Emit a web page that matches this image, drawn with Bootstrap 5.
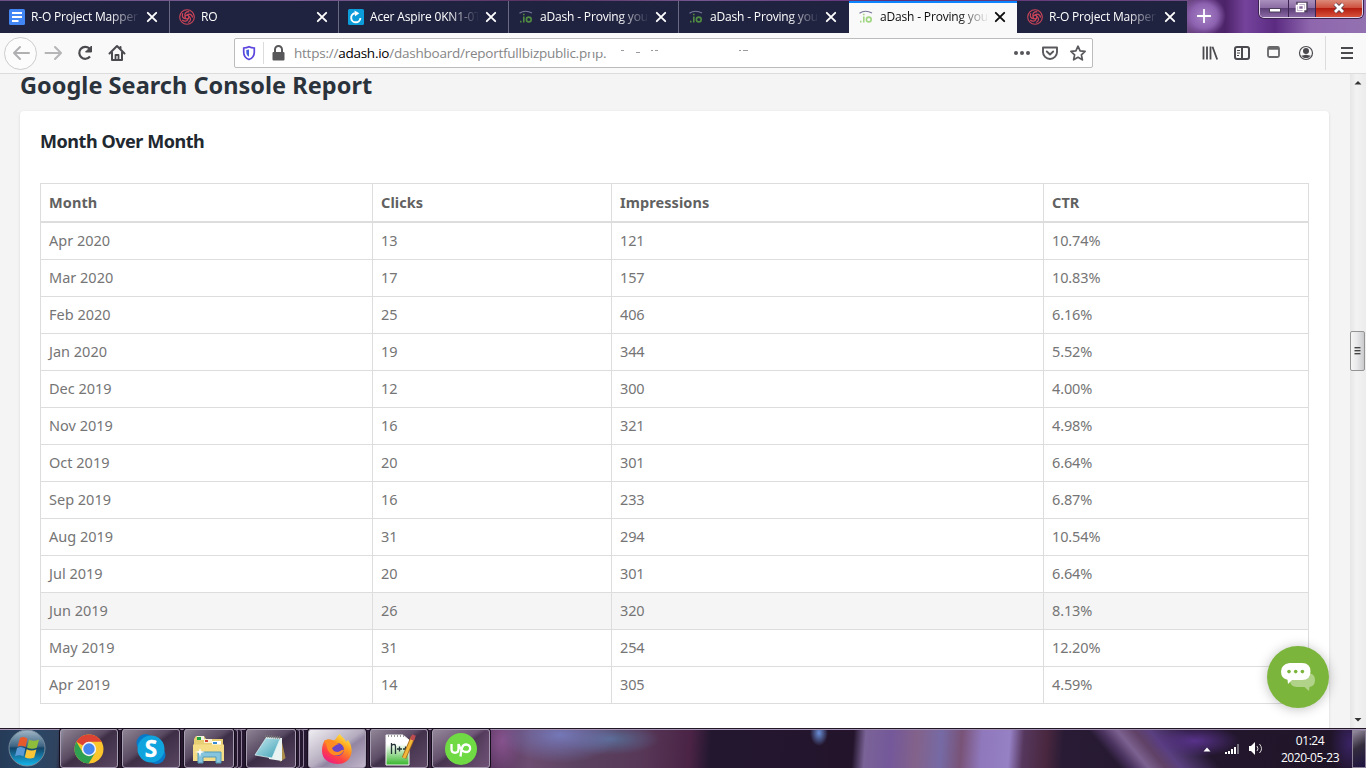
<!DOCTYPE html>
<html lang="en">
<head>
<meta charset="utf-8">
<title>aDash - Proving your</title>
<link href="https://cdn.jsdelivr.net/npm/bootstrap@5.3.0/dist/css/bootstrap.min.css" rel="stylesheet">
<style>
body{width:1366px;height:768px;overflow:hidden;font-family:"Open Sans","Noto Sans",sans-serif;background:#f4f4f4}
svg{display:block;flex:none}
.titlebar{height:33px;background:
 radial-gradient(ellipse 22px 20px at 1204px 16px,#a783c6,#8d62b0 60%,transparent),
 linear-gradient(90deg,#6b5185 0,#7a5d94 300px,#57305f 540px,#75568f 700px,#602f76 900px,#6d4b83 1187px,#5d3277 1200px,#4c2268 1225px,#75439b 1245px,#5b2b82 1275px,#8e66ad 1310px,#9372b1 1366px);padding-top:1px}
.tab-item{height:32px;background:#202340;color:#fff;border-right:1px solid #6a6a82;font-size:12px;padding-left:9px}
.tab-item.current{background:#f9f9fa;color:#0c0c0d;border:0;border-top:2px solid #0a84ff}
.tab-text{width:112px;margin-left:6px;margin-right:3px;white-space:nowrap;letter-spacing:-.17px;padding-bottom:1px;-webkit-mask-image:linear-gradient(90deg,#000 78px,transparent 109px);mask-image:linear-gradient(90deg,#000 78px,transparent 109px)}
.current .tab-text{margin-right:2px}
.caption-group{width:104px;height:18px;margin-left:auto;margin-right:3px;border:1px solid #e0d4ea;border-top:0;border-radius:0 0 5px 5px;margin-top:-1px;overflow:hidden;box-shadow:0 0 0 1px #3c2450}
.caption-group>div{height:100%;background:linear-gradient(#a990bd,#8a6aa3 48%,#5d3f77 50%,#8a68a4);border-right:1px solid #3c2450}
.caption-group>.closer{background:linear-gradient(#dc8a78,#cf5140 45%,#b51d10 50%,#d7513a);border:0}
.toolbar{height:41px;background:#f9f9fa;border-bottom:1px solid #dcdcdd;padding-left:4px;color:#4a4a4f}
.tool{width:32px;height:32px}
.back-ring{width:33px;height:33px;border:1px solid #ccc;border-radius:50%;background:#fcfcfc;color:#b0b0b3}
.urlbar{width:859px;height:30px;margin-left:101px;border:1px solid #bcbcbe;border-radius:2px;background:#fff;font-size:13.5px;letter-spacing:-.24px;color:#858587}
.vline{width:1px;background:#dcdcdd}
.viewport{height:654px;background:#f4f4f4}
.page-main{width:1350px;padding:0 21px 0 20px;font-family:"Noto Sans","Open Sans",sans-serif;overflow:hidden}
.page-main h2{font-size:23.5px;font-weight:700;color:#2a323c;line-height:22px;height:37px;margin:0;letter-spacing:.03px}
.panel{height:640px;background:#fff;border-radius:4px;box-shadow:0 1px 3px rgba(0,0,0,.13);padding:18px 20px 0}
.panel h3{font-size:18px;font-weight:700;line-height:24px;height:54px;margin:0;color:#212830;letter-spacing:-.45px}
.report{table-layout:fixed;width:1269px;border-collapse:separate;border-spacing:0;border:0 solid #ddd;border-width:1px 0 0 1px;font-size:14.5px;line-height:20px;margin:0;color:#757575}
.report>:not(caption)>*>*{border:0 solid #ddd;border-width:0 1px 1px 0;padding:7px 8px 9px;color:#757575;background:transparent;box-shadow:none}
.report>thead>tr>th{border-bottom-width:2px;height:39px;padding:8px 8px 9px;color:#616161;letter-spacing:.08px}
.report>tbody>tr>td{height:37px;letter-spacing:-.12px}
.report>tbody>tr>td:first-child{letter-spacing:0}
.report>tbody>tr.hovered>td{background:#f5f5f5}
.scroller{width:16px;background:linear-gradient(90deg,#e6e6e6,#f2f2f2 40%,#ececec)}
.scroll-thumb{width:15px;height:40px;margin-top:245px;border:1px solid #949494;border-radius:2px;background:linear-gradient(90deg,#f6f6f6,#e9e9eb 45%,#c9cacc)}
.chat-fab{left:1267px;top:646px;width:62px;height:62px;border-radius:50%;background:#7cb53c;box-shadow:0 1px 12px rgba(0,0,0,.25)}
.taskbar{height:40px;border-top:1px solid #201827;box-shadow:inset 0 1px #a794b4;color:#fff;background:
 radial-gradient(ellipse 60px 28px at 560px 6px,#7478b8,transparent),
 radial-gradient(ellipse 50px 16px at 610px 10px,#586b94,transparent),
 radial-gradient(ellipse 20px 30px at 502px 12px,#86528d,transparent),
 radial-gradient(ellipse 9px 13px at 819px 4px,#6a8fd8,transparent),
 radial-gradient(ellipse 45px 16px at 1195px 12px,#58328b,transparent),
 linear-gradient(50deg,transparent 858px,#4b3360 868px,#7c6290 880px,#604166 893px,#5a4080 905px,transparent 935px),
 radial-gradient(ellipse 20px 34px at 1350px 14px,#3a2364,transparent),
 linear-gradient(94deg,#253b58 0,#2b4665 40px,#30435e 58px,#29192f 65px,#251730 300px,#35203c 430px,#5d3763 490px,#6c4c70 530px,#5b4260 580px,#583858 640px,#4a2345 690px,#231730 710px,#23142b 852px,#7a6397 864px,#74589a 890px,#83628a 915px,#766aa5 940px,#795377 960px,#8f78bb 980px,#9681c5 1008px,#56375d 1022px,#49273f 1045px,#291b35 1062px,#24182f 1140px,#201529 1300px,#1d1326 100%)}
.start-orb{width:60px;padding-left:8px}
.task{height:39px;width:58px;border:1px solid #a99db3;border-radius:3px;background:linear-gradient(145deg,rgba(225,220,230,.55),rgba(150,135,160,.45) 42%,rgba(80,65,90,.55) 50%,rgba(122,100,130,.6));margin-right:4px;box-shadow:0 0 0 1px #150e1c}
.task.short-task{width:50px;margin-right:0}
.task.lit{background:linear-gradient(145deg,#f0edf2,#b5adbf 50%,#9185a2 60%,#c2b6cb)}
.stack-edge{width:4px;height:39px;border:1px solid #8d8098;border-left:0;border-radius:0 3px 3px 0}
.clock{width:78px;text-align:center;font-size:12px;line-height:17px;letter-spacing:-.45px;margin-right:3px}
.peek{width:14px;height:38px;border:1px solid #8c8298;background:linear-gradient(150deg,#968ea1,#342d3d 45%,#1d1240)}
</style>
</head>
<body>
<svg width="0" height="0" class="position-absolute">
<defs>
<symbol id="x" viewBox="0 0 12 12"><path d="M1.8 1.8l8.4 8.4M10.2 1.8L1.8 10.2" stroke="currentColor" stroke-width="1.9" stroke-linecap="round"/></symbol>
<symbol id="knot" viewBox="0 0 16 16"><g fill="none" stroke="#cf4558" stroke-width="1.25"><circle cx="8" cy="8" r="7.300" stroke-width="1.100"/><circle cx="8" cy="8" r="1.900"/><path d="M8 6.100C10.500 4 12.800 5.500 13.700 8.500"/><path transform="rotate(72 8 8)" d="M8 6.100C10.500 4 12.800 5.500 13.700 8.500"/><path transform="rotate(144 8 8)" d="M8 6.100C10.500 4 12.800 5.500 13.700 8.500"/><path transform="rotate(216 8 8)" d="M8 6.100C10.500 4 12.800 5.500 13.700 8.500"/><path transform="rotate(288 8 8)" d="M8 6.100C10.500 4 12.800 5.500 13.700 8.500"/></g></symbol>
<symbol id="io" viewBox="0 0 16 16"><path d="M1.5 4.2C5 1.8 10 1.8 14 4" fill="none" stroke="#77769a" stroke-width="1.1"/><g fill="none" stroke="currentColor" stroke-width="1.6"><path d="M2 12.6h1.500M5.800 7.500v6M5.800 4.800v1.400"/><circle cx="10.800" cy="10.500" r="2.400"/></g></symbol>
<linearGradient id="ff" x1=".8" y1="0" x2=".2" y2="1"><stop offset="0" stop-color="#fff04a"/><stop offset=".35" stop-color="#ff9d1e"/><stop offset=".7" stop-color="#ff4046"/><stop offset="1" stop-color="#e8188c"/></linearGradient>
<linearGradient id="orb" x1="0" y1="0" x2="0" y2="1"><stop offset="0" stop-color="#a3b8c8"/><stop offset=".45" stop-color="#3e6584"/><stop offset=".5" stop-color="#144468"/><stop offset="1" stop-color="#14b8ed"/></linearGradient>
<linearGradient id="pad" x1="0" y1="0" x2="1" y2="1"><stop offset="0" stop-color="#c8eaf0"/><stop offset="1" stop-color="#3b9fb4"/></linearGradient>
<linearGradient id="npp" x1="0" y1="0" x2="0" y2="1"><stop offset=".3" stop-color="#fff"/><stop offset="1" stop-color="#36b52b"/></linearGradient>
</defs>
</svg>

<header class="titlebar d-flex">
 <div class="tab-item d-flex align-items-center" style="width:170px"><svg width="16" height="16"><rect width="16" height="16" rx="1.5" fill="#4285f4"/><path d="M3 4h10M3 8h10M3 12h6.500" stroke="#fff" stroke-width="1.9"/></svg><div class="tab-text">R-O Project Mapper -</div><svg width="12" height="12"><use href="#x"/></svg></div>
 <div class="tab-item d-flex align-items-center" style="width:169px"><svg width="16" height="16"><use href="#knot"/></svg><div class="tab-text">RO</div><svg width="12" height="12"><use href="#x"/></svg></div>
 <div class="tab-item d-flex align-items-center" style="width:170px"><svg width="16" height="16"><rect width="16" height="16" rx="1.5" fill="#0c9cda"/><path d="M6.800 4.200A4.600 4.600 0 1 0 12.400 9" fill="none" stroke="#fff" stroke-width="1.900"/><path d="M6.500 1.500l4.800 2.800-4.300 3z" fill="#fff"/></svg><div class="tab-text">Acer Aspire 0KN1-0T2</div><svg width="12" height="12"><use href="#x"/></svg></div>
 <div class="tab-item d-flex align-items-center" style="width:170px"><svg width="16" height="16" color="#508b42"><use href="#io"/></svg><div class="tab-text">aDash - Proving your</div><svg width="12" height="12"><use href="#x"/></svg></div>
 <div class="tab-item d-flex align-items-center border-0" style="width:170px"><svg width="16" height="16" color="#508b42"><use href="#io"/></svg><div class="tab-text">aDash - Proving your</div><svg width="12" height="12"><use href="#x"/></svg></div>
 <div class="tab-item current d-flex align-items-center" style="width:168px;padding-bottom:2px"><svg width="16" height="16" color="#a0d681"><use href="#io"/></svg><div class="tab-text">aDash - Proving your</div><svg width="12" height="12"><use href="#x"/></svg></div>
 <div class="tab-item d-flex align-items-center border-0" style="width:170px;padding-left:10px"><svg width="16" height="16"><use href="#knot"/></svg><div class="tab-text">R-O Project Mapper -</div><svg width="12" height="12"><use href="#x"/></svg></div>
 <svg width="34" height="32"><path d="M10 15h14M17 8v14" stroke="#fff" stroke-width="1.8"/></svg>
 <div class="caption-group d-flex">
  <div style="width:29px"><svg width="28" height="17"><rect x="9.500" y="8.500" width="11" height="3.500" fill="#fff" stroke="#4d3d5c"/></svg></div>
  <div style="width:27px"><svg width="26" height="17"><path d="M9 3.500h8v7H9z" fill="none" stroke="#4d3d5c" stroke-width="3.500"/><path d="M9.500 3.500h7v6h-7zM7.500 5.500h7v6h-7z" fill="#8a6aa3" stroke="#fff" stroke-width="1.600"/></svg></div>
  <div class="closer flex-fill"><svg width="46" height="17"><path d="M19 4l8 8M27 4l-8 8" stroke="#59404c" stroke-width="4.500"/><path d="M19 4l8 8M27 4l-8 8" stroke="#fff" stroke-width="2.800"/></svg></div>
 </div>
</header>

<nav class="toolbar d-flex align-items-center">
 <div class="back-ring d-flex align-items-center justify-content-center"><svg width="18" height="16" fill="none" stroke="currentColor" stroke-width="2" stroke-linecap="round" stroke-linejoin="round"><path d="M17 8H2M8 2L2 8l6 6"/></svg></div>
 <svg class="tool" fill="none" stroke="#b5b5b7" stroke-width="2" stroke-linecap="round" stroke-linejoin="round"><path d="M8.500 16h15M18 10l6 6-6 6"/></svg>
 <svg class="tool" fill="none" stroke="currentColor" stroke-width="2.200"><path d="M20.500 11.500A6 6 0 1 0 21 19.500"/><path d="M22.500 9v6h-6z" fill="currentColor" stroke-width="1"/></svg>
 <svg class="tool" fill="none" stroke="currentColor" stroke-width="2" stroke-linejoin="round" stroke-linecap="round"><path d="M8.500 16.500L16 9l7.500 7.500M11 15.500V23h10v-7.500M19.500 10v2"/><path d="M14.500 22v-4h3v4" stroke-width="1.800"/></svg>
 <div class="urlbar d-flex align-items-center position-relative">
  <svg width="28" height="28"><path d="M14 7.800c2 1 3.700 1.200 5.300 1.200v4c0 4-2.300 6.500-5.300 7.500-3-1-5.300-3.500-5.300-7.500V9c1.600 0 3.300-.2 5.300-1.200z" fill="none" stroke="#5b45dd" stroke-width="1.700"/><path d="M14 10.500v7.300c-1.800-.9-2.700-2.600-2.700-4.800v-2z" fill="#4560df"/></svg>
  <div class="vline" style="height:22px"></div>
  <svg width="30" height="28"><rect x="8.500" y="13" width="12" height="8.500" rx="1" fill="#58585b"/><path d="M11 13v-2.500a3.500 3.500 0 0 1 7 0V13" fill="none" stroke="#58585b" stroke-width="2"/></svg>
  <span class="text-nowrap">https://<span class="text-black">adash.io</span>/dashboard/reportfullbizpublic.php.</span>
  <svg class="position-absolute" style="left:350px;top:2px" width="180" height="16"><path d="M2 0h50v14H24l-6-3H2z" fill="#fff"/><path d="M36 9.500h3M51 11.500h4M66 9.500h2M70 9.500h3M154 9.500h2M158 9.500h5" stroke="#9a9aa0"/></svg>
  <div class="ms-auto d-flex">
   <svg width="28" height="28" fill="#55555a"><circle cx="8" cy="14" r="2"/><circle cx="14" cy="14" r="2"/><circle cx="20" cy="14" r="2"/></svg>
   <svg width="28" height="28" fill="none" stroke="#58585d" stroke-width="1.900" stroke-linecap="round" stroke-linejoin="round"><path d="M7 8.500h14V13a7 7 0 0 1-14 0z"/><path d="M10.800 12.500l3.200 3 3.200-3"/></svg>
   <svg width="28" height="28" fill="none" stroke="#58585d" stroke-width="1.700" stroke-linejoin="round"><path d="M14 7.200l2.100 4.600 5 .6-3.700 3.400 1 5-4.400-2.500-4.400 2.500 1-5-3.700-3.400 5-.6z"/></svg>
  </div>
 </div>
 <div class="d-flex ms-auto align-items-center">
  <svg class="tool" fill="none" stroke="currentColor" stroke-width="1.800"><path d="M9.500 9.500v13M13 9.500v13M16.500 9.500v13M18.500 9.700l4.700 12.800"/></svg>
  <svg class="tool" fill="none" stroke="currentColor" stroke-width="2"><rect x="9" y="10" width="14" height="12" rx="2"/><path d="M16 10v12"/><path d="M11 13.500h3M11 16h3M11 18.500h2" stroke-width="1"/></svg>
  <svg class="tool" fill="none" stroke="#67676a" stroke-width="1.800"><rect x="10" y="10" width="11" height="10" rx="1.500"/><path d="M10 11.500h11" stroke-width="2.500"/></svg>
  <svg class="tool" fill="currentColor"><circle cx="16" cy="16" r="6.500" fill="none" stroke="currentColor" stroke-width="1.200"/><circle cx="16" cy="14" r="3"/><path d="M11.300 18.500c2 0 2.700-.8 4.700-.8s2.700.8 4.700.8c-1 1.600-2.700 2.600-4.700 2.600s-3.700-1-4.700-2.600z"/></svg>
  <div class="vline" style="height:34px;margin:0 5px 0 3px"></div>
  <svg class="tool" style="margin-right:3px" stroke="currentColor" stroke-width="2"><path d="M10 11h12M10 16h12M10 21h12"/></svg>
 </div>
</nav>

<div class="viewport d-flex">
 <main class="page-main">
  <h2>Google Search Console Report</h2>
  <section class="panel">
   <h3>Month Over Month</h3>
   <table class="table report">
    <colgroup><col style="width:332px"><col style="width:239px"><col style="width:432px"><col style="width:265px"></colgroup>
    <thead><tr><th>Month</th><th>Clicks</th><th>Impressions</th><th>CTR</th></tr></thead>
    <tbody>
     <tr><td>Apr 2020</td><td>13</td><td>121</td><td>10.74%</td></tr>
     <tr><td>Mar 2020</td><td>17</td><td>157</td><td>10.83%</td></tr>
     <tr><td>Feb 2020</td><td>25</td><td>406</td><td>6.16%</td></tr>
     <tr><td>Jan 2020</td><td>19</td><td>344</td><td>5.52%</td></tr>
     <tr><td>Dec 2019</td><td>12</td><td>300</td><td>4.00%</td></tr>
     <tr><td>Nov 2019</td><td>16</td><td>321</td><td>4.98%</td></tr>
     <tr><td>Oct 2019</td><td>20</td><td>301</td><td>6.64%</td></tr>
     <tr><td>Sep 2019</td><td>16</td><td>233</td><td>6.87%</td></tr>
     <tr><td>Aug 2019</td><td>31</td><td>294</td><td>10.54%</td></tr>
     <tr><td>Jul 2019</td><td>20</td><td>301</td><td>6.64%</td></tr>
     <tr class="hovered"><td>Jun 2019</td><td>26</td><td>320</td><td>8.13%</td></tr>
     <tr><td>May 2019</td><td>31</td><td>254</td><td>12.20%</td></tr>
     <tr><td>Apr 2019</td><td>14</td><td>305</td><td>4.59%</td></tr>
    </tbody>
   </table>
  </section>
 </main>
 <div class="scroller d-flex flex-column">
  <svg width="16" height="12"><path d="M4.500 10.500l3.500-3.500 3.500 3.500z" fill="#333"/></svg>
  <div class="scroll-thumb"><svg width="13" height="38"><path d="M3.500 15.500h6M3.500 18.500h6M3.500 21.500h6" stroke="#444"/><path d="M3.500 16.500h6M3.500 19.500h6M3.500 22.500h6" stroke="#aaa"/></svg></div>
  <svg class="mt-auto" width="16" height="14"><path d="M4.500 4l3.500 3.500L11.500 4z" fill="#333"/></svg>
 </div>
</div>
<div class="chat-fab position-absolute"><svg width="62" height="62"><path d="M25 27h15q8 0 8 7 0 6-5.500 7l-.5 4-4.500-4H30q-7 0-7-7z" fill="#b0d389"/><path d="M22.500 17h12.500q8.500 0 8.500 8.500T35 34H25l-4 4-.5-4.300Q14 32.500 14 25.500T22.500 17z" fill="#fff"/><g fill="#7cb53c"><circle cx="22" cy="25.600" r="1.800"/><circle cx="28.700" cy="25.600" r="1.800"/><circle cx="35.400" cy="25.600" r="1.800"/></g></svg></div>

<footer class="taskbar d-flex">
 <div class="start-orb"><svg width="38" height="38"><circle cx="19" cy="19" r="18" fill="url(#orb)" stroke="#768b9b"/><path d="M12 9c3-2 5-1 7.500.5l-1.900 8.500C15 16.500 12.500 16.300 9.500 17.500z" fill="#e65a2c"/><path d="M21 10.500c3 1.500 6 1.700 10 0l-2.200 8.200c-3 1.500-6.500 1.300-9.700 0z" fill="#8ebd3b"/><path d="M9 19c3-1.500 5.500-1 8.300.5l-1.900 8c-2.500-1.500-5-1.700-8.400-.3z" fill="#5999d5"/><path d="M18.700 20.200c3 1.500 6.300 1.600 9.700.3l-2.200 8c-3 1.500-6.300 1.300-9.400-.3z" fill="#fac536"/></svg></div>
 <div class="task d-flex align-items-center justify-content-center"><svg width="30" height="30" viewBox="0 0 30 30"><circle cx="15" cy="15" r="14.500" fill="#fbc52c"/><path d="M15 15L2.400 7.700A14.500 14.500 0 0 1 27.600 7.700H15z" fill="#dc4333"/><path d="M2.400 7.700A14.500 14.500 0 0 0 14.600 29.500L21.300 18.600 15 15 8.700 18.600z" fill="#2f9f52"/><circle cx="15" cy="15" r="7.200" fill="#f4f4f4"/><circle cx="15" cy="15" r="5.700" fill="#4687ef"/></svg></div>
 <div class="task d-flex align-items-center justify-content-center"><svg width="32" height="32"><circle cx="10.500" cy="10" r="9" fill="#0878c8"/><circle cx="21.500" cy="22" r="9" fill="#0878c8"/><circle cx="16" cy="16" r="13.500" fill="#10a4df"/><text x="16" y="24" text-anchor="middle" font-family="Open Sans, sans-serif" font-size="22.500" font-weight="700" fill="#fff" stroke="#fff" stroke-width=".4">S</text></svg></div>
 <div class="task short-task d-flex align-items-center justify-content-center"><svg width="34" height="32"><path d="M2 6l2-3h8l2 3h17v20H2z" fill="#e8ce73"/><path d="M5 3h7v4H5z" fill="#f2f2df"/><path d="M5 4h4v3H5z" fill="#20a441"/><path d="M12 6h8v4h-8z" fill="#f9f1d4"/><path d="M13 7h3v2h-3z" fill="#d94131"/><path d="M20 8h9v4h-9z" fill="#fff"/><path d="M21 9h4v2h-4z" fill="#358ad6"/><path d="M1 11.500h31v16.500H1z" fill="#f5dc86"/><path d="M6 30V19h23v11h-5v-6H11v6z" fill="#87c5df" stroke="#549bb8"/><path d="M8 15l1 3 4 1-4 1-1 4-1-4-4-1 4-1z" fill="#fff"/></svg></div><div class="stack-edge"></div><div class="stack-edge" style="margin-right:4px"></div>
 <div class="task short-task d-flex align-items-center justify-content-center"><svg width="34" height="34"><path d="M27 6l4.500 20-5.500 4-3-19z" fill="#ad8e4c"/><path d="M12 5l16 1v23l-13-2z" fill="#e8f3f2"/><path d="M12 6l14 1-8 19-17-3z" fill="url(#pad)" stroke="#e2f5f7" stroke-width=".7"/><path d="M11 4l16 2" stroke="#777" stroke-width="3" stroke-dasharray="1 1"/></svg></div><div class="stack-edge"></div><div class="stack-edge" style="margin-right:4px"></div>
 <div class="task lit d-flex align-items-center justify-content-center"><svg width="34" height="34" viewBox="0 0 34 34"><path d="M2 19c0-5 1-8 3-11l2 3c2-2 5-3 8-3 2-3 3-5 5-6 1 3 5 4 6 8l2-2c7 9 4 24-10 24C9 32 2 27 2 19z" fill="url(#ff)"/><circle cx="17.500" cy="17.500" r="6.500" fill="#6945c7"/><path d="M4 9c4-3 8-2 11 1l4 2c-1 3-5 2-6 4 1 3 3 3 5 3 2 1 4-2 6-1-2 6-10 7-14 3C6 17 8 13 4 9z" fill="#ff8b22"/><path d="M12 16c1 3 3 4 6 4 3-1 4-3 4-6-2-2-4-2-6-1z" fill="#6945c7"/></svg></div>
 <div class="task d-flex align-items-center justify-content-center"><svg width="34" height="34" viewBox="0 0 34 34"><path d="M4 3h17l6 5v25H4z" fill="url(#npp)" stroke="#f5f5f5"/><path d="M6 4h16" stroke="#999" stroke-width="2" stroke-dasharray="1 2"/><path d="M9.500 22V11M9.500 13.500q4-2.500 4 1V22M15 17h5m-2.500-2.500v5M21 17h5m-2.500-2.500v5" fill="none" stroke="#243337" stroke-width="1.300"/><path d="M31 5L22 26" stroke="#a7681c" stroke-width="4.500"/><path d="M31 5L22 26" stroke="#f2b83b" stroke-width="3"/><path d="M32 3l-2 5" stroke="#bd4c53" stroke-width="4"/></svg></div>
 <div class="task d-flex align-items-center justify-content-center"><svg width="34" height="34"><circle cx="17" cy="17" r="16" fill="#6fda44"/><path d="M7.500 12v5c0 5 7 5 7 0v-5c1.500 4.500 3.500 8 7.500 8 5.500 0 5.500-7.500 0-7.500-4 0-4.500 4-5.500 12" fill="none" stroke="#fff" stroke-width="2.300"/></svg></div>
 <div class="ms-auto d-flex align-items-center">
  <svg width="72" height="38"><path d="M4.500 21.500h7l-3.500-4z" fill="#fff"/><path d="M27 24v-2M30 24v-3M33 24v-5M36 24v-7" stroke="#fff" stroke-width="2"/><path d="M39 24V14" stroke="#77717e" stroke-width="2"/><path d="M50 16h2l4-4v13l-4-4h-2z" fill="#fff"/><path d="M58 16q2 3 0 5M60.500 14q4 5 0 9" fill="none" stroke="#ddd"/></svg>
  <div class="clock">01:24<br>2020-05-23</div>
  <div class="peek"></div>
 </div>
</footer>
<script src="https://cdn.jsdelivr.net/npm/bootstrap@5.3.0/dist/js/bootstrap.bundle.min.js"></script>
</body>
</html>
